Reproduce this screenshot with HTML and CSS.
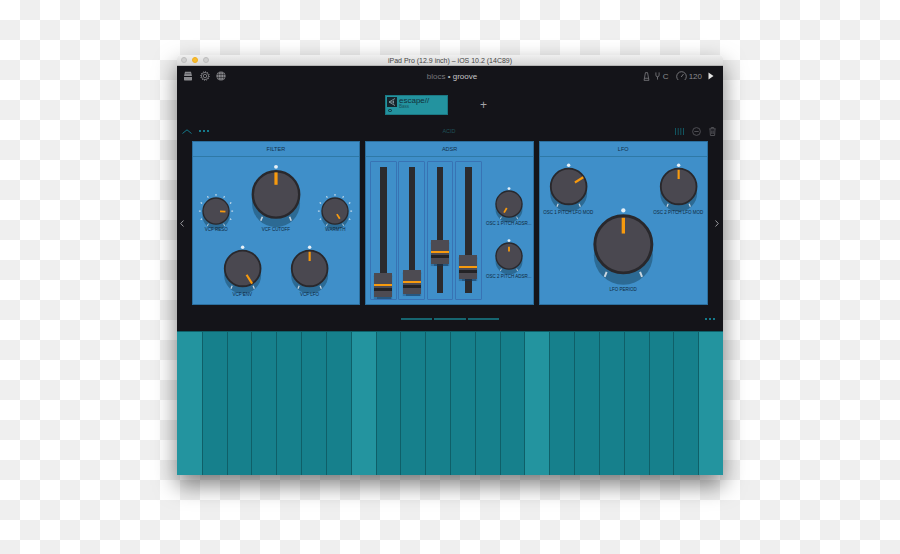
FILE: index.html

```html
<!DOCTYPE html>
<html lang="en">
<head>
    <meta charset="UTF-8">
    <meta name="viewport" content="width=device-width, initial-scale=1.0">
    <title>iPad Pro (12.9 inch) - blocs groove</title>
    <link rel="stylesheet" href="styles.css">
</head>
<body>
    <!-- shared knob parts, 60 units wide face centred on 50,38 -->
    <svg class="defs" width="0" height="0">
        <defs>
            <g id="knob-base">
                <circle cx="50" cy="49" r="30" fill="#2c6a94"/>
                <line x1="31" y1="71" x2="33" y2="66" stroke="#c9d6e0" stroke-width="2"/>
                <line x1="69" y1="71" x2="67" y2="66" stroke="#c9d6e0" stroke-width="2"/>
                <circle cx="50" cy="38" r="29" fill="#4a4850" stroke="#29282c" stroke-width="3"/>
            </g>
            <g id="knob-ring" stroke="#d5e4ef" stroke-width="2.400">
                <line x1="12" y1="38" x2="16" y2="38"/>
                <line x1="16" y1="19" x2="19" y2="21"/>
                <line x1="31" y1="5" x2="33" y2="8"/>
                <line x1="50" y1="0" x2="50" y2="4"/>
                <line x1="69" y1="5" x2="67" y2="8"/>
                <line x1="84" y1="19" x2="81" y2="21"/>
                <line x1="88" y1="38" x2="84" y2="38"/>
                <line x1="84" y1="57" x2="81" y2="55"/>
                <line x1="16" y1="57" x2="19" y2="55"/>
            </g>
        </defs>
    </svg>

    <div class="window">
        <div class="titlebar">
            <span class="light"></span>
            <span class="light light-yellow"></span>
            <span class="light"></span>
            <span class="window-title">iPad Pro (12.9 inch) – iOS 10.2 (14C89)</span>
        </div>

        <div class="app">
            <div class="topbar">
                <div class="icons">
                    <svg width="10" height="10" viewBox="0 0 10 10"><path d="M2 .8h6l1 4.400v3.600a.6.6 0 0 1-.6.6H1.600a.6.6 0 0 1-.6-.6V5.200z" fill="#8b8b8f"/><rect x="1" y="5" width="8" height="1" fill="#141419"/><rect x="2.500" y="2.200" width="5" height="1" fill="#55555a"/></svg>
                    <svg width="10" height="10" viewBox="0 0 10 10" fill="none" stroke="#8b8b8f"><circle cx="5" cy="5" r="1.700" stroke-width=".8"/><circle cx="5" cy="5" r="3.600" stroke-width=".8"/><circle cx="5" cy="5" r="4.300" stroke-width="1" stroke-dasharray="1 1.200"/></svg>
                    <svg width="10" height="10" viewBox="0 0 10 10"><circle cx="5" cy="5" r="4.600" fill="#8b8b8f"/><path d="M.6 3.500h8.800M.6 6.500h8.800M5 .4v9.200M3 1C2 4 2 6 3 9M7 1c1 3 1 5 0 8" fill="none" stroke="#141419" stroke-width=".5"/></svg>
                </div>
                <div class="app-title">blocs <span class="sep">•</span> <span class="app-name">groove</span></div>
                <div class="transport">
                    <svg class="metronome" width="7" height="9" viewBox="0 0 8 10" fill="none" stroke="#8b8b8f" stroke-width=".8"><path d="M2.800.6h2.400L6.800 9.400H1.200zM1.800 7h4.400"/></svg>
                    <span class="tuning">
                        <svg width="5" height="8" viewBox="0 0 6 10" fill="none" stroke="#8b8b8f" stroke-width=".9"><path d="M1 .5v3.400a2 2 0 0 0 4 0V.5M3 6v3.500"/></svg>
                        C
                    </span>
                    <span class="tempo">
                        <svg width="11" height="10" viewBox="0 0 11 10" fill="none" stroke="#8b8b8f" stroke-width=".8"><path d="M2.200 9a4.800 4.800 0 1 1 6.600 0M5.200 6l2.300-3"/></svg>
                        120
                    </span>
                    <svg class="play" width="6" height="8" viewBox="0 0 6 8"><path d="M.5.500 5.500 4 .5 7.500z" fill="#e4e4e4"/></svg>
                </div>
            </div>

            <div class="tracks">
                <div class="tile">
                    <div class="tile-icon">
                        <svg width="10" height="10" viewBox="0 0 10 10" fill="none" stroke="#8fa6ab" stroke-width=".8"><path d="M8 1.500 2 5l6 3.500M2 5h4.500M6.500 3.500V6.500"/></svg>
                    </div>
                    <div class="tile-text">
                        <div class="tile-name">escape//</div>
                        <div class="tile-sub">Bass</div>
                    </div>
                    <span class="tile-dot"></span>
                </div>
                <span class="add">+</span>
            </div>

            <div class="toolbar">
                <div class="toolbar-left">
                    <svg width="10" height="5" viewBox="0 0 10 5" fill="none" stroke="#15798a" stroke-width="1"><path d="M.5 4.500 5 .8l4.500 3.700"/></svg>
                    <span class="dots"><i></i><i></i><i></i></span>
                </div>
                <div class="preset">ACID</div>
                <div class="toolbar-right">
                    <svg width="9" height="7" viewBox="0 0 9 7" stroke="#125560" stroke-width="1"><path d="M.5 0v7M3.200 0v7M5.800 0v7M8.500 0v7"/></svg>
                    <svg width="9" height="9" viewBox="0 0 9 9" fill="none" stroke="#55555a" stroke-width=".9"><circle cx="4.500" cy="4.500" r="3.900"/><path d="M2.300 4.500h4.400"/></svg>
                    <svg width="7" height="9" viewBox="0 0 7 9" fill="none" stroke="#55555a" stroke-width=".9"><path d="M.3 1.800h6.400M2.300 1.600V.5h2.400v1.100M1 2l.4 6.500h4.200L6 2M2.800 3.500v3.500M4.200 3.500v3.500"/></svg>
                </div>
            </div>

            <div class="stage">
                <div class="side">
                    <svg width="4" height="7" viewBox="0 0 4 7" fill="none" stroke="#9a9a9e"><path d="M3.500.5.700 3.500l2.800 3"/></svg>
                </div>

                <section class="panel">
                    <h2 class="panel-title">FILTER</h2>
                    <div class="panel-body filter">
                        <div class="knob-row row-top">
                            <div class="knob knob-xs">
                                <svg viewBox="10 0 80 72"><use href="#knob-ring"/><use href="#knob-base"/><line x1="50" y1="17" x2="50" y2="29" class="pointer" transform="rotate(93 50 38)"/></svg>
                                <span class="knob-label">VCF RESO</span>
                            </div>
                            <div class="knob knob-md">
                                <svg viewBox="10 0 80 72"><use href="#knob-base"/><circle cx="50" cy="3.500" r="2.400" class="dot"/><line x1="50" y1="10.500" x2="50" y2="26" class="pointer"/></svg>
                                <span class="knob-label">VCF CUTOFF</span>
                            </div>
                            <div class="knob knob-xs">
                                <svg viewBox="10 0 80 72"><use href="#knob-ring"/><use href="#knob-base"/><line x1="50" y1="18" x2="50" y2="30" class="pointer" transform="rotate(148 50 38)"/></svg>
                                <span class="knob-label">WARMTH</span>
                            </div>
                        </div>
                        <div class="knob-row row-bottom">
                            <div class="knob knob-sm">
                                <svg viewBox="10 0 80 72"><use href="#knob-base"/><circle cx="50" cy="3.500" r="2.800" class="dot"/><line x1="50" y1="9" x2="50" y2="26" class="pointer" transform="rotate(148 50 38)"/></svg>
                                <span class="knob-label">VCF ENV</span>
                            </div>
                            <div class="knob knob-sm">
                                <svg viewBox="10 0 80 72"><use href="#knob-base"/><circle cx="50" cy="3.500" r="2.800" class="dot"/><line x1="50" y1="11" x2="50" y2="26" class="pointer"/></svg>
                                <span class="knob-label">VCF LFO</span>
                            </div>
                        </div>
                    </div>
                </section>

                <section class="panel">
                    <h2 class="panel-title">ADSR</h2>
                    <div class="panel-body adsr">
                        <div class="faders">
                            <div class="fader"><div class="track"><div class="handle" style="top: 106px"></div></div></div>
                            <div class="fader"><div class="track"><div class="handle" style="top: 103px"></div></div></div>
                            <div class="fader"><div class="track"><div class="handle" style="top: 73px"></div></div></div>
                            <div class="fader"><div class="track"><div class="handle" style="top: 88px"></div></div></div>
                        </div>
                        <div class="adsr-knobs">
                            <div class="knob knob-xs">
                                <svg viewBox="10 0 80 72"><use href="#knob-base"/><circle cx="50" cy="3.500" r="3.200" class="dot"/><line x1="50" y1="16" x2="50" y2="28" class="pointer" transform="rotate(210 50 38)"/></svg>
                                <span class="knob-label">OSC 1 PITCH ADSR...</span>
                            </div>
                            <div class="knob knob-xs">
                                <svg viewBox="10 0 80 72"><use href="#knob-base"/><circle cx="50" cy="3.500" r="3.200" class="dot"/><line x1="50" y1="17" x2="50" y2="28" class="pointer"/></svg>
                                <span class="knob-label">OSC 2 PITCH ADSR...</span>
                            </div>
                        </div>
                    </div>
                </section>

                <section class="panel">
                    <h2 class="panel-title">LFO</h2>
                    <div class="panel-body lfo">
                        <div class="knob-row lfo-top">
                            <div class="knob knob-sm">
                                <svg viewBox="10 0 80 72"><use href="#knob-base"/><circle cx="50" cy="3.500" r="2.800" class="dot"/><line x1="50" y1="10" x2="50" y2="26" class="pointer" transform="rotate(58 50 38)"/></svg>
                                <span class="knob-label">OSC 1 PITCH LFO MOD</span>
                            </div>
                            <div class="knob knob-sm">
                                <svg viewBox="10 0 80 72"><use href="#knob-base"/><circle cx="50" cy="3.500" r="2.800" class="dot"/><line x1="50" y1="11" x2="50" y2="26" class="pointer"/></svg>
                                <span class="knob-label">OSC 2 PITCH LFO MOD</span>
                            </div>
                        </div>
                        <div class="knob-row lfo-bottom">
                            <div class="knob knob-lg">
                                <svg viewBox="10 0 80 72"><use href="#knob-base"/><circle cx="50" cy="3.500" r="2.200" class="dot"/><line x1="50" y1="11" x2="50" y2="27" class="pointer"/></svg>
                                <span class="knob-label">LFO PERIOD</span>
                            </div>
                        </div>
                    </div>
                </section>

                <div class="side">
                    <svg width="4" height="7" viewBox="0 0 4 7" fill="none" stroke="#9a9a9e"><path d="M.5.500l2.800 3-2.800 3"/></svg>
                </div>
            </div>

            <div class="pager">
                <div class="pages"><i></i><i></i><i></i></div>
                <span class="dots"><i></i><i></i><i></i></span>
            </div>
        </div>

        <div class="keys">
            <div class="key key-c"></div><div class="key"></div><div class="key"></div><div class="key"></div><div class="key"></div><div class="key"></div><div class="key"></div>
            <div class="key key-c"></div><div class="key"></div><div class="key"></div><div class="key"></div><div class="key"></div><div class="key"></div><div class="key"></div>
            <div class="key key-c"></div><div class="key"></div><div class="key"></div><div class="key"></div><div class="key"></div><div class="key"></div><div class="key"></div>
            <div class="key key-c"></div>
        </div>
    </div>
</body>
</html>
```

FILE: styles.css

```css
* {
    box-sizing: border-box;
}

html, body {
    height: 100%;
}

body {
    margin: 0;
    padding-top: 55px;
    overflow: hidden;
    font-family: "Liberation Sans", Arial, sans-serif;
    background: repeating-conic-gradient(#efefef 0 25%, #fff 0 50%) 0 0 / 40px 40px;
}

.defs {
    position: absolute;
}

.window {
    width: 546px;
    margin: 0 auto;
    border-radius: 4px 4px 0 0;
    box-shadow: 0 10px 22px rgba(0, 0, 0, 0.5);
}

.titlebar {
    position: relative;
    display: flex;
    align-items: center;
    gap: 5px;
    height: 11px;
    padding-left: 4px;
    background: linear-gradient(#efefef, #d6d6d6);
    border-radius: 4px 4px 0 0;
    border-bottom: 1px solid #b5b5b5;
}

.light {
    width: 6px;
    height: 6px;
    border-radius: 50%;
    background: #d0d0d0;
    border: 0.5px solid #bdbdbd;
}

.light-yellow {
    background: #f8bc2d;
    border-color: #f0ae20;
}

.window-title {
    position: absolute;
    left: 0;
    right: 0;
    text-align: center;
    font-size: 7px;
    line-height: 11px;
    color: #444;
}

.app {
    background: #141419;
}

.topbar {
    display: grid;
    grid-template-columns: 1fr auto 1fr;
    align-items: center;
    height: 20px;
    padding: 0 9px 0 6px;
}

.icons {
    display: flex;
    gap: 6.500px;
}

.app-title {
    margin-left: 7px;
    font-size: 8px;
    color: #77777c;
}

.app-title .sep {
    color: #bbb;
}

.app-name {
    color: #c6c6c8;
}

.transport {
    display: flex;
    justify-content: flex-end;
    align-items: center;
    gap: 7px;
    font-size: 8px;
    color: #8b8b8f;
}

.metronome {
    margin-right: -2px;
}

.tuning, .tempo {
    display: flex;
    align-items: center;
    gap: 3px;
}

.tempo {
    gap: 2px;
}

.play {
    margin-left: -1px;
}

.tracks {
    display: flex;
    align-items: center;
    gap: 32px;
    height: 38px;
    padding-left: 208px;
    padding-bottom: 1px;
}

.tile {
    position: relative;
    display: flex;
    gap: 2px;
    width: 63px;
    height: 20px;
    padding: 1px;
    background: #23939f;
    border: 1px solid #1b7883;
}

.tile-icon {
    width: 10px;
    height: 10px;
    background: #16242b;
}

.tile-icon svg {
    display: block;
}

.tile-name {
    font-size: 8px;
    line-height: 7px;
    color: #12303a;
}

.tile-sub {
    font-size: 4.500px;
    line-height: 5px;
    color: #17525c;
}

.tile-dot {
    position: absolute;
    left: 2px;
    bottom: 1.500px;
    width: 3.500px;
    height: 3.500px;
    border-radius: 50%;
    background: #23939f;
    border: 1px solid #12303a;
}

.add {
    font-size: 12px;
    color: #a5a5a8;
}

.toolbar {
    display: grid;
    grid-template-columns: 1fr auto 1fr;
    align-items: center;
    height: 17px;
    padding: 0 7px 3px 5px;
}

.toolbar-left, .toolbar-right {
    display: flex;
    align-items: center;
}

.toolbar-left {
    gap: 7px;
}

.toolbar-right {
    justify-content: flex-end;
    gap: 8px;
}

.dots {
    display: flex;
    gap: 2px;
}

.dots i {
    width: 2px;
    height: 2px;
    background: #15798a;
}

.preset {
    font-size: 5.500px;
    color: #1f5058;
}

.stage {
    display: flex;
    gap: 5px;
}

.side {
    display: flex;
    align-items: center;
    justify-content: center;
    width: 9.500px;
}

.panel {
    width: 168.700px;
    height: 164px;
    background: #3f8fc9;
    border: 1px solid #2c6f9e;
}

.panel-title {
    height: 15px;
    margin: 0;
    font-size: 5.500px;
    font-weight: normal;
    line-height: 14px;
    text-align: center;
    color: #14304a;
    border-bottom: 1px solid #2f79a6;
}

.knob-row {
    display: flex;
    justify-content: center;
    align-items: flex-end;
}

.knob {
    display: flex;
    flex-direction: column;
    align-items: center;
    flex: none;
}

.knob svg {
    display: block;
    flex: none;
    overflow: visible;
}

.knob-label {
    font-size: 4.500px;
    line-height: 5px;
    white-space: nowrap;
    color: #10283c;
}

/* width set on the knob too, so a long label hangs over instead of pushing it */
.knob-lg { width: 78.700px; gap: 9px; }
.knob-md { width: 64px; gap: 5px; }
.knob-sm { width: 49.300px; gap: 3px; }
.knob-xs { width: 36px; gap: 2px; }

.knob-lg svg { width: 78.700px; height: 70.800px; }
.knob-md svg { width: 64px; height: 57.600px; }
.knob-sm svg { width: 49.300px; height: 44.400px; }
.knob-xs svg { width: 36px; height: 32.400px; }

.pointer {
    stroke: #f79a0e;
    stroke-width: 4;
}

.knob-lg .pointer { stroke-width: 3.400; }
.knob-sm .pointer { stroke-width: 3.500; }

.dot {
    fill: #e6f0f7;
}

.filter {
    padding-top: 7px;
}

.filter .knob-xs {
    gap: 0;
}

.row-top {
    gap: 9.500px;
}

.row-bottom {
    gap: 18px;
    margin-top: 13.500px;
}

.adsr {
    display: flex;
    gap: 9px;
    padding: 4px 0 0 4px;
}

.faders {
    display: flex;
    gap: 1.600px;
}

.fader {
    width: 26.700px;
    height: 139px;
    padding-top: 4.500px;
    border: 1.500px solid #3873b4;
    border-radius: 1px;
}

.track {
    position: relative;
    width: 6.300px;
    height: 126.700px;
    margin: 0 auto;
    background: #2b2b2e;
}

.handle {
    position: absolute;
    left: -6px;
    width: 18px;
    height: 24px;
    box-shadow: 0 1.500px 1px rgba(22, 50, 80, 0.6);
    background: linear-gradient(#4d4b52 0, #4d4b52 8px, #38373b 8px, #38373b 8.500px, #4d4b52 8.500px, #4d4b52 11px, #f79a0e 11px, #f79a0e 13px, #4d4b52 13px, #4d4b52 15px, #232326 15px, #232326 18px, #4d4b52 18px);
}

.adsr-knobs {
    display: flex;
    flex-direction: column;
    gap: 13px;
    margin-top: 26px;
}

.lfo {
    padding-top: 5.500px;
}

.lfo-top {
    gap: 60.700px;
}

.lfo-bottom {
    margin-top: -7.500px;
}

.pager {
    display: grid;
    grid-template-columns: 1fr auto 1fr;
    align-items: center;
    height: 26px;
    padding-top: 2px;
}

.pages {
    grid-column: 2;
    display: flex;
    gap: 2px;
}

.pages i {
    width: 31.500px;
    height: 1.500px;
    background: #166570;
}

.pager .dots {
    justify-self: end;
    margin-right: 8px;
}

.keys {
    display: grid;
    grid-template-columns: repeat(22, 1fr);
    height: 144px;
    border-top: 1px solid #0f5f68;
}

.key {
    background: #16808c;
    border-left: 1px solid #0f5f68;
}

.key-c {
    background: #23949f;
}

.key:first-child {
    border-left: 0;
}
```
